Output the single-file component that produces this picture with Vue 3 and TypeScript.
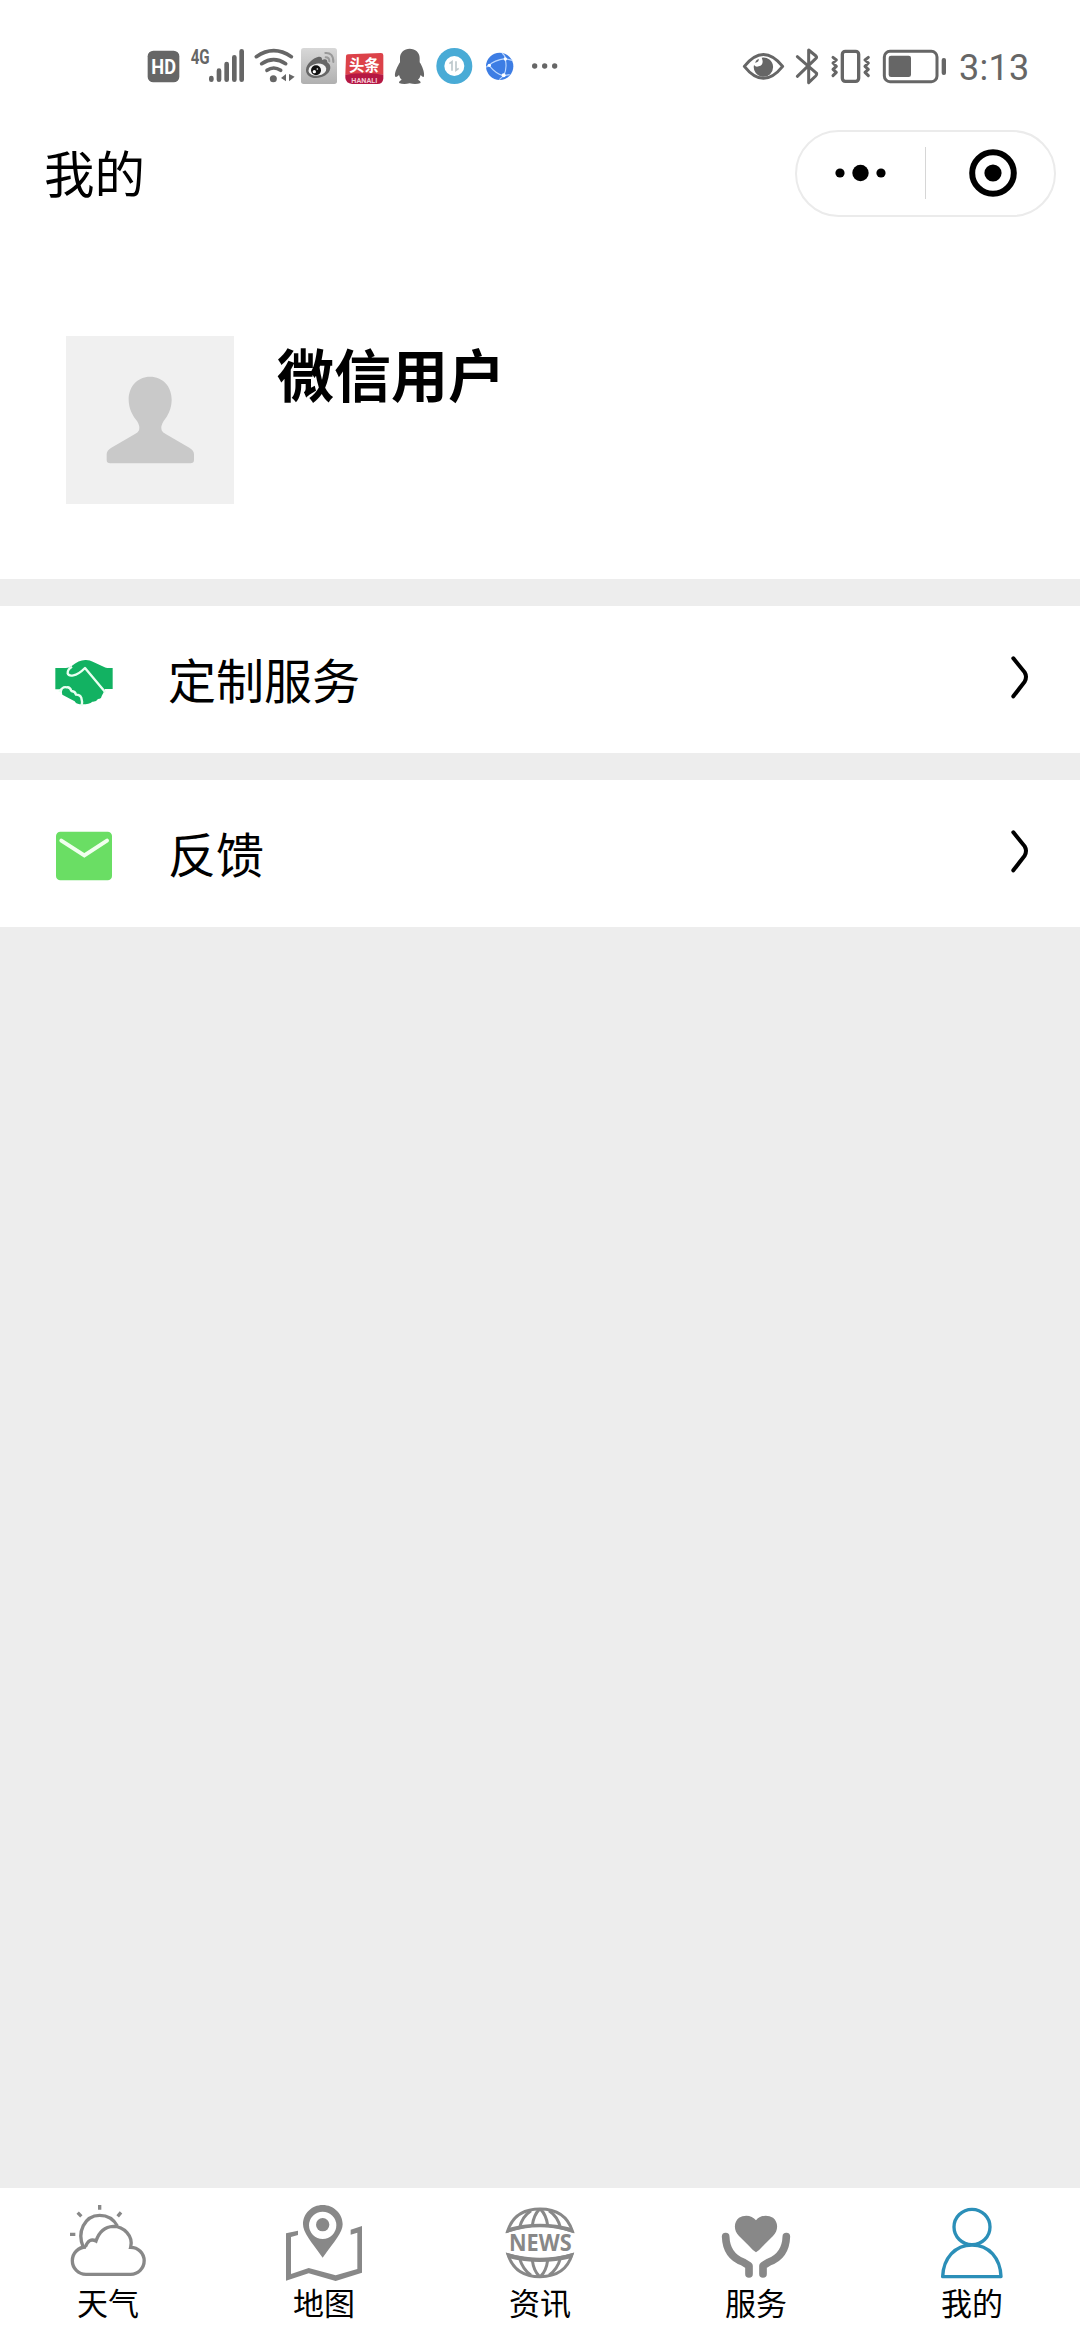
<script setup lang="ts">
import { ref } from 'vue'

interface MenuRow {
  id: 'custom' | 'feedback'
  label: string
}

interface Tab {
  id: 'weather' | 'map' | 'news' | 'service' | 'mine'
  label: string
  viewBox: string
}

const rows: MenuRow[] = [
  { id: 'custom', label: '定制服务' },
  { id: 'feedback', label: '反馈' },
]

const tabs: Tab[] = [
  { id: 'weather', label: '天气', viewBox: '84 66 240 240' },
  { id: 'map', label: '地图', viewBox: '732 66 240 240' },
  { id: 'news', label: '资讯', viewBox: '60 66 240 240' },
  { id: 'service', label: '服务', viewBox: '708 66 240 240' },
  { id: 'mine', label: '我的', viewBox: '96 66 240 240' },
]

const active = ref<Tab['id']>('mine')
</script>

<template>
  <div class="screen">
    <header class="status">
      <div class="status-left">
        <svg width="55" height="70" viewBox="0 0 165 210">
          <rect x="53" y="62" width="95" height="95" rx="17" fill="#666" />
          <text x="101" y="131" text-anchor="middle" class="hd" textLength="74" lengthAdjust="spacingAndGlyphs">HD</text>
        </svg>
        <svg width="65" height="70" viewBox="165 0 195 210">
          <text x="182" y="101" class="net" textLength="57" lengthAdjust="spacingAndGlyphs">4G</text>
          <g stroke="#666" stroke-width="14" stroke-linecap="round">
            <path d="M244 144v5M267 122v27M290 102v47M313 82v67M335 64v85" />
          </g>
        </svg>
        <svg width="47" height="70" viewBox="360 0 141 210">
          <g fill="none" stroke="#666" stroke-width="11" stroke-linecap="round">
            <path d="M379 80Q431 44 484 80" />
            <path d="M395 101Q431 77 467 101" />
            <path d="M411 121Q431 107 452 121" />
          </g>
          <circle cx="430" cy="146" r="10.500" fill="#666" />
          <path d="M468 132v22l-15-10zM477 132v22l17-14z" fill="#666" />
        </svg>
        <svg width="43" height="70" viewBox="501 0 129 210">
          <defs>
            <linearGradient id="weibo" x1="0" y1="0" x2="0" y2="1">
              <stop offset="0" stop-color="#d8d8d8" />
              <stop offset="1" stop-color="#b0b0b0" />
            </linearGradient>
          </defs>
          <rect x="513" y="54" width="108" height="108" rx="8" fill="url(#weibo)" />
          <path d="M528 119C529 102 548 84 566 80Q577 79 576 90Q592 84 592 97Q602 103 601 115C598 134 577 144 558 144C540 144 527 133 528 119Z" fill="#666" />
          <ellipse cx="562" cy="119" rx="27" ry="18" transform="rotate(-8 562 119)" fill="#f2f2f2" />
          <circle cx="558" cy="121" r="15" fill="#111" />
          <circle cx="553" cy="125" r="5" fill="#fff" />
          <circle cx="562" cy="117" r="2.500" fill="#fff" />
          <path d="M586 69Q610 67 610 96M587 82Q598 82 598 94" fill="none" stroke="#999" stroke-width="6" stroke-linecap="round" />
        </svg>
        <svg width="50" height="70" viewBox="0 0 150 210">
          <path d="M18 78Q18 73 24 73L123 69Q130 69 130 76V134H16Z" fill="#dc4249" />
          <path d="M16 134Q72 126 130 134V146Q128 162 112 162H36Q18 160 16 144Z" fill="#b51843" />
          <text x="73" y="124" text-anchor="middle" class="news-app" textLength="92" lengthAdjust="spacingAndGlyphs">头条</text>
          <text x="73" y="158" text-anchor="middle" class="news-sub" textLength="78" lengthAdjust="spacingAndGlyphs">HANALI</text>
        </svg>
        <svg width="40" height="70" viewBox="150 0 120 210">
          <path d="M209 56C193 56 180 67 180 84V97C174 106 163 127 165 139Q168 144 177 135Q179 144 185 149Q176 153 177 159Q190 164 209 160Q228 164 242 159Q243 153 234 149Q240 144 242 135Q250 144 252 139C254 127 246 106 239 97V84C239 67 226 56 209 56Z" fill="#666" />
        </svg>
        <svg width="50" height="70" viewBox="270 0 150 210">
          <circle cx="343" cy="108" r="54" fill="#49abd6" />
          <circle cx="343" cy="108" r="30" fill="#fff" />
          <path d="M328 101l8-6v27M348 94v27l8-6" fill="none" stroke="#bdc8cc" stroke-width="5" />
        </svg>
        <svg width="40" height="70" viewBox="420 0 120 210">
          <circle cx="479" cy="109" r="41" fill="#3d7de4" />
          <path d="M486 69Q497 77 496 89Q502 116 491 137Q470 134 447 106Q462 91 496 86L517 91M447 106L439 112M491 137L478 149M491 137L509 134" fill="none" stroke="#bcd8ff" stroke-width="3.500" />
          <circle cx="496" cy="87" r="5" fill="#fff" />
          <circle cx="448" cy="106" r="5" fill="#fff" />
          <circle cx="491" cy="136" r="6" fill="#fff" />
        </svg>
        <svg width="50" height="70" viewBox="540 0 150 210" fill="#666">
          <circle cx="584" cy="108" r="8" />
          <circle cx="614" cy="108" r="8" />
          <circle cx="644" cy="108" r="8" />
        </svg>
      </div>
      <div class="status-right">
        <svg width="60" height="70" viewBox="0 0 180 210">
          <path d="M43 109Q100 38 158 109Q100 181 43 109Z" fill="none" stroke="#666" stroke-width="9" stroke-linejoin="round" />
          <path d="M95 83A29 29 0 1 1 72 105Q77 112 86 109Q104 104 95 83Z" fill="#666" />
          <path d="M75 98Q78 89 86 86Q88 96 75 98Z" fill="#666" />
        </svg>
        <svg width="35" height="70" viewBox="180 0 105 210">
          <path d="M202 80L260 130Q261 134 257 138L236 158V60L258 78Q262 82 257 86L202 139" fill="none" stroke="#666" stroke-width="9" stroke-linecap="round" stroke-linejoin="round" />
        </svg>
        <svg width="52" height="70" viewBox="285 0 156 210">
          <rect x="337" y="64" width="49" height="90" rx="9" fill="none" stroke="#666" stroke-width="10" />
          <path d="M309 82l10 8-10 9 10 10-10 9 10 9-10 10M415 82l-10 8 10 9-10 10 10 9-10 9 10 10" fill="none" stroke="#666" stroke-width="9" stroke-linecap="round" stroke-linejoin="round" />
        </svg>
        <svg width="74" height="70" viewBox="441 0 222 210">
          <rect x="463" y="64" width="158" height="91" rx="17" fill="none" stroke="#666" stroke-width="9" />
          <rect x="476" y="77" width="67" height="64" rx="7" fill="#666" />
          <rect x="635" y="84" width="13" height="51" rx="6" fill="#666" />
        </svg>
        <span class="clock">3:13</span>
      </div>
    </header>

    <nav class="titlebar">
      <h1>我的</h1>
      <div class="capsule">
        <button type="button" class="more" aria-label="更多">
          <svg width="52" height="18" viewBox="0 0 52 18">
            <circle cx="5" cy="9" r="4.600" />
            <circle cx="25.500" cy="9" r="8.200" />
            <circle cx="46" cy="9" r="4.600" />
          </svg>
        </button>
        <i class="divider"></i>
        <button type="button" class="close" aria-label="关闭">
          <svg width="48" height="48" viewBox="0 0 48 48">
            <circle cx="24" cy="24" r="20.800" fill="none" stroke="#000" stroke-width="6" />
            <circle cx="24" cy="24" r="8.600" />
          </svg>
        </button>
      </div>
    </nav>

    <section class="profile">
      <svg class="avatar" viewBox="48 48 504 504">
        <path d="M300 170C263 170 236 199 236 239C236 266 249 288 261 303Q271 318 267 331Q265 337 255 342L184 383Q170 391 170 403V420Q170 430 181 430H421Q432 430 432 420V403Q432 391 418 383L347 342Q337 337 335 331Q331 318 341 303C353 288 365 266 365 239C365 199 338 170 300 170Z" fill="#c9c9c9" />
      </svg>
      <h2>微信用户</h2>
    </section>

    <main class="menu">
      <div v-for="row in rows" :key="row.id" class="row">
        <svg v-if="row.id === 'custom'" class="row-icon" viewBox="72 245 180 180">
          <path d="M76 293H108Q116 293 125 287Q147 268 168 269Q180 269 190 275L224 291Q227 293 233 293H248V356H225Q220 369 215 377Q214 386 204 386Q199 395 187 394Q178 402 157 402H149Q137 400 134 393L97 373Q94 364 98 357H76Z" fill="#12b262" />
          <g fill="none" stroke="#e9fff1" stroke-width="7" stroke-linejoin="round">
            <path d="M126 289Q112 297 113 309Q116 318 130 315Q145 313 165 293L226 366" />
            <path d="M88 365Q98 347 110 351Q120 349 124 362Q136 363 138 373Q151 373 154 383Q158 394 155 407" />
          </g>
        </svg>
        <svg v-else class="row-icon" viewBox="72 768 180 180">
          <rect x="78" y="785" width="168" height="146" rx="13" fill="#6ade64" />
          <path d="M94 812L163 856L231 812" fill="none" stroke="#f1ffef" stroke-width="12" stroke-linecap="round" />
        </svg>
        <span class="row-label">{{ row.label }}</span>
        <svg class="chevron" width="20" height="46" viewBox="87 252 60 138">
          <path d="M97 265L131 307Q139 320 131 335L97 379" fill="none" stroke="#000" stroke-width="12" stroke-linecap="round" />
        </svg>
      </div>
    </main>

    <footer class="tabbar">
      <button v-for="tab in tabs" :key="tab.id" type="button" class="tab" @click="active = tab.id">
        <svg class="tab-icon" :class="{ active: active === tab.id }" :viewBox="tab.viewBox">
          <g v-if="tab.id === 'weather'" fill="none" stroke="currentColor" stroke-width="10">
            <path d="M130 202C110 158 133 106 179 106Q215 106 232 138" />
            <path d="M138 201A41 41 0 0 0 138 283H272A40 40 0 1 0 272 202C281 168 251 139 220 139Q182 141 168 183Q147 172 136 201Z" />
            <path d="M179 75v14M113 98l11 11M243 97l-10 12M90 163h16" />
          </g>
          <g v-else-if="tab.id === 'map'" fill="currentColor">
            <path fill-rule="evenodd" d="M848 75C815 75 789 101 789 133C789 157 812 184 848 233C884 184 908 157 908 133C908 101 881 75 848 75ZM848 95A41 41 0 1 1 848 177A41 41 0 1 1 848 95Z" />
            <circle cx="848" cy="134" r="20" />
            <path d="M774 152V165L753 171V282L806 264L887 286L952 267V158L932 164V149L966 138V278L887 303L806 280L738 302V160Z" />
          </g>
          <g v-else-if="tab.id === 'news'">
            <path d="M83 153Q104 87 180 87Q256 87 277 153Q180 121 83 153ZM84 224Q105 290 180 290Q256 290 276 224Q180 254 84 224Z" fill="none" stroke="currentColor" stroke-width="9" />
            <path d="M78 160Q180 121 282 160L276 144Q180 118 84 144ZM78 218Q180 248 282 218L276 234Q180 258 84 234Z" fill="currentColor" />
            <path d="M153 92Q127 109 119 142M178 88Q161 105 157 136M182 88Q199 105 203 136M207 92Q233 109 241 142M119 236Q128 268 153 286M157 241Q161 272 178 289M203 241Q199 272 182 289M241 236Q232 268 207 286" fill="none" stroke="currentColor" stroke-width="9" />
            <text x="181" y="213" text-anchor="middle" class="globe-text" textLength="188" lengthAdjust="spacingAndGlyphs">NEWS</text>
          </g>
          <g v-else-if="tab.id === 'service'">
            <path d="M828 217Q818 211 805 196L777 168C760 151 761 126 777 113C793 103 817 105 828 121C839 105 863 103 879 113C895 126 896 151 879 168L851 196Q838 211 828 217Z" fill="currentColor" />
            <path d="M737 170Q739 228 789 246L807 257V282M919 170Q917 228 867 246L849 257V282" fill="none" stroke="currentColor" stroke-width="23" stroke-linecap="round" stroke-linejoin="round" />
          </g>
          <g v-else fill="none" stroke="currentColor" stroke-width="10">
            <ellipse cx="216" cy="141" rx="54" ry="53" />
            <path d="M128 290C130 235 165 195 216 195C267 195 301 235 303 290Z" stroke-linejoin="round" />
          </g>
        </svg>
        <span>{{ tab.label }}</span>
      </button>
    </footer>
  </div>
</template>

<style>
body {
  margin: 0;
  background: #ededed;
}
</style>

<style scoped>
.screen {
  display: flex;
  flex-direction: column;
  width: 1080px;
  height: 2340px;
  background: #ededed;
  color: #000;
  font-family: "Noto Sans CJK SC", sans-serif;
}

svg {
  display: block;
  flex: none;
}

button {
  padding: 0;
  border: 0;
  background: none;
  color: inherit;
  font: inherit;
}

.status {
  display: flex;
  justify-content: space-between;
  height: 70px;
  padding: 30px 50px 0 130px;
  background: #fff;
}

.status-left,
.status-right {
  display: flex;
}

.status-right {
  width: 300px;
}

.clock {
  margin-left: 8px;
  color: #666;
  font: 36px/77px Roboto, sans-serif;
  letter-spacing: 0.3px;
  white-space: nowrap;
}

.hd {
  fill: #fff;
  font: bold 59px Roboto, sans-serif;
}

.net {
  fill: #666;
  font: bold 58px Roboto, sans-serif;
}

.news-app {
  fill: #fff;
  font: bold 48px "Noto Sans CJK SC", sans-serif;
}

.news-sub {
  fill: #f3c6d3;
  font: bold 20px Roboto, sans-serif;
}

.titlebar {
  display: flex;
  align-items: center;
  justify-content: space-between;
  height: 146px;
  padding: 0 24px 0 44px;
  background: #fff;
}

.titlebar h1 {
  margin: 0 0 4px;
  font-size: 50.5px;
  font-weight: 400;
  line-height: 70px;
}

.capsule {
  display: flex;
  align-items: center;
  box-sizing: border-box;
  width: 261px;
  height: 87px;
  border: 2px solid #ebebeb;
  border-radius: 44px;
}

.capsule button {
  display: flex;
  box-sizing: border-box;
  justify-content: center;
}

.more {
  width: 128px;
}

.close {
  width: 128px;
  padding-left: 5px;
}

.divider {
  width: 1px;
  height: 52px;
  background: #d6d6d6;
}

.profile {
  display: flex;
  box-sizing: border-box;
  height: 333px;
  padding: 90px 66px 0;
  background: #fff;
}

.avatar {
  width: 168px;
  height: 168px;
  background: #f0f0f0;
}

.profile h2 {
  margin: 0 0 0 43px;
  font-size: 57px;
  font-weight: 700;
  line-height: 72px;
}

.menu {
  display: flex;
  flex: 1;
  flex-direction: column;
  gap: 27px;
  padding-top: 27px;
}

.row {
  display: flex;
  align-items: center;
  box-sizing: border-box;
  height: 147px;
  padding: 0 50px 0 54px;
  background: #fff;
}

.row-icon {
  width: 60px;
  height: 60px;
  margin-top: 4px;
}

.row-label {
  flex: 1;
  margin: 0 0 4px 54px;
  font-size: 48px;
  line-height: 70px;
}

.chevron {
  margin-bottom: 5px;
}

.tabbar {
  display: flex;
  height: 152px;
  background: #fff;
}

.tab {
  display: flex;
  flex: 1;
  flex-direction: column;
  align-items: center;
  padding-top: 14px;
  font-size: 31px;
  line-height: 40px;
}

.tab-icon {
  width: 80px;
  height: 80px;
  color: #888;
}

.tab-icon.active {
  color: #2b8fb8;
}

.globe-text {
  fill: currentColor;
  font: bold 67px "Noto Sans", sans-serif;
}
</style>
